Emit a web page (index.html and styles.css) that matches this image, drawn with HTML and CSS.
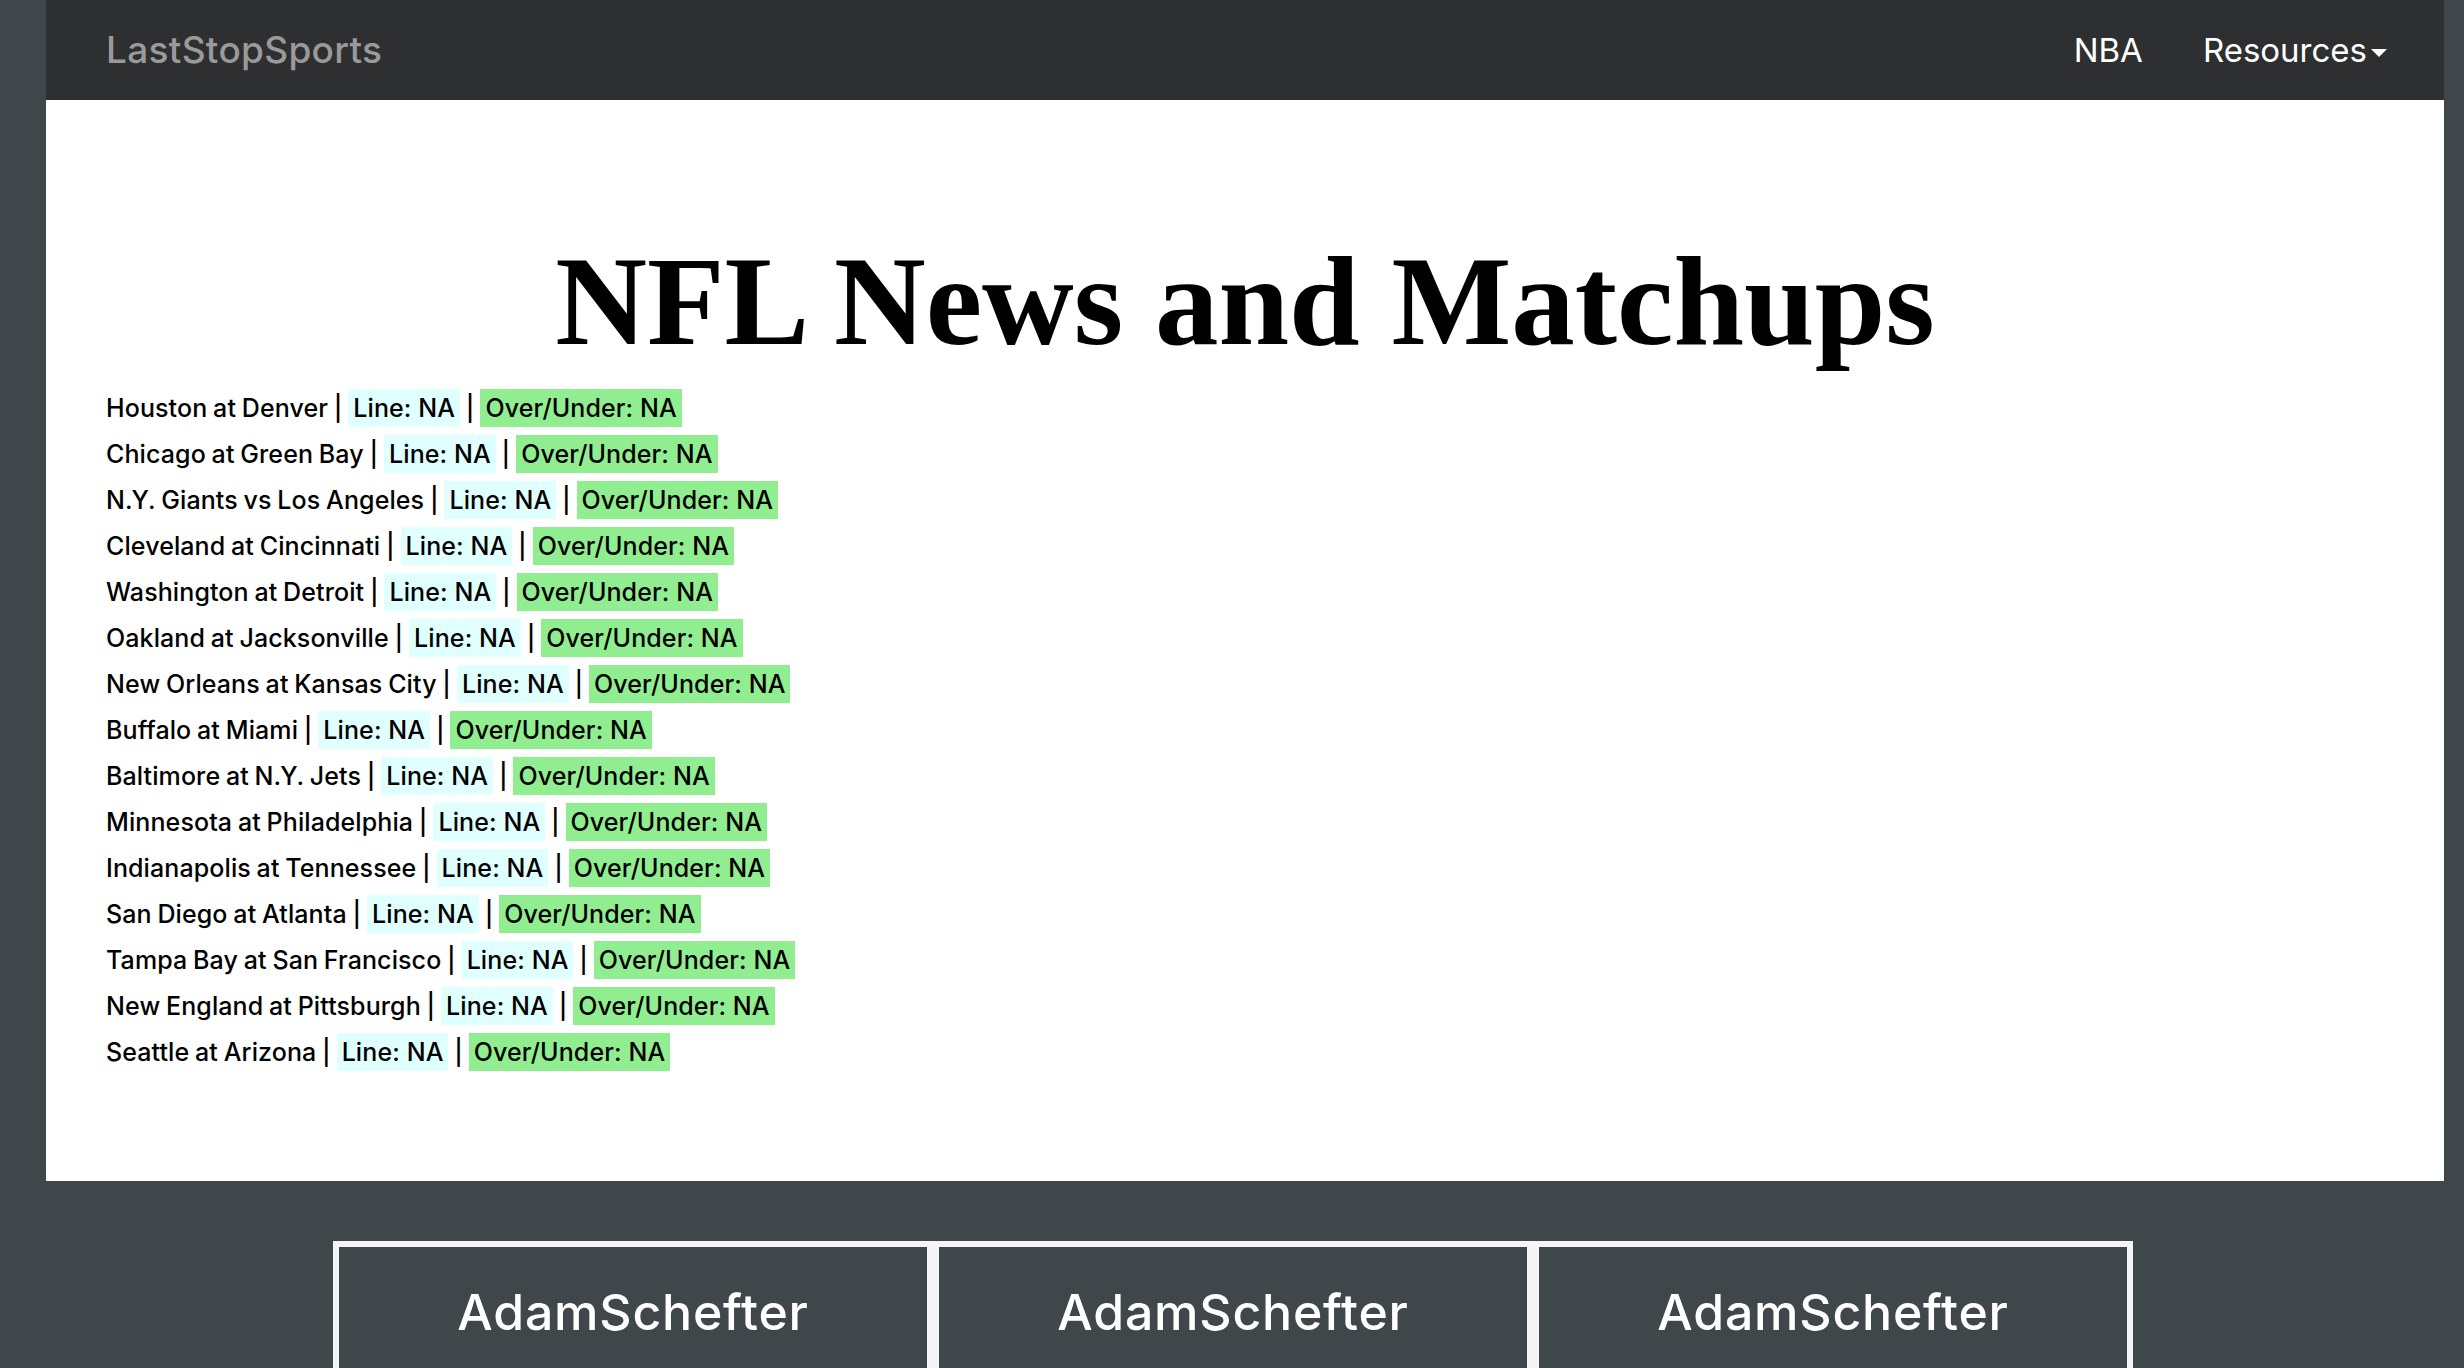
FILE: index.html
```html
<!DOCTYPE html>
<html lang="en">
<head>
<meta charset="utf-8">
<title>LastStopSports - NFL</title>
<link rel="stylesheet" href="styles.css">
</head>
<body>
<div class="page">
  <nav class="navbar">
    <a class="brand" href="#">LastStopSports</a>
    <ul class="nav">
      <li><a href="#">NBA</a></li>
      <li class="last"><a href="#">Resources<span class="caret"></span></a></li>
    </ul>
  </nav>
  <main class="content">
    <h1 class="title">NFL News and Matchups</h1>
    <div class="games">
      <div class="game">Houston at Denver | <span class="line">Line: NA</span> | <span class="ou">Over/Under: NA</span></div>
      <div class="game">Chicago at Green Bay | <span class="line">Line: NA</span> | <span class="ou">Over/Under: NA</span></div>
      <div class="game">N.Y. Giants vs Los Angeles | <span class="line">Line: NA</span> | <span class="ou">Over/Under: NA</span></div>
      <div class="game">Cleveland at Cincinnati | <span class="line">Line: NA</span> | <span class="ou">Over/Under: NA</span></div>
      <div class="game">Washington at Detroit | <span class="line">Line: NA</span> | <span class="ou">Over/Under: NA</span></div>
      <div class="game">Oakland at Jacksonville | <span class="line">Line: NA</span> | <span class="ou">Over/Under: NA</span></div>
      <div class="game">New Orleans at Kansas City | <span class="line">Line: NA</span> | <span class="ou">Over/Under: NA</span></div>
      <div class="game">Buffalo at Miami | <span class="line">Line: NA</span> | <span class="ou">Over/Under: NA</span></div>
      <div class="game">Baltimore at N.Y. Jets | <span class="line">Line: NA</span> | <span class="ou">Over/Under: NA</span></div>
      <div class="game">Minnesota at Philadelphia | <span class="line">Line: NA</span> | <span class="ou">Over/Under: NA</span></div>
      <div class="game">Indianapolis at Tennessee | <span class="line">Line: NA</span> | <span class="ou">Over/Under: NA</span></div>
      <div class="game">San Diego at Atlanta | <span class="line">Line: NA</span> | <span class="ou">Over/Under: NA</span></div>
      <div class="game">Tampa Bay at San Francisco | <span class="line">Line: NA</span> | <span class="ou">Over/Under: NA</span></div>
      <div class="game">New England at Pittsburgh | <span class="line">Line: NA</span> | <span class="ou">Over/Under: NA</span></div>
      <div class="game">Seattle at Arizona | <span class="line">Line: NA</span> | <span class="ou">Over/Under: NA</span></div>
    </div>
  </main>
</div>
<section class="tweets">
  <div class="tweet"><h2 class="tweet-name">AdamSchefter</h2></div>
  <div class="tweet"><h2 class="tweet-name">AdamSchefter</h2></div>
  <div class="tweet"><h2 class="tweet-name">AdamSchefter</h2></div>
</section>
</body>
</html>
```
FILE: styles.css
```css
html, body {
  margin: 0;
  padding: 0;
}
body {
  background: #3f474a;
  font-family: Inter, "Open Sans", "DejaVu Sans", sans-serif;
  color: #000;
  overflow: hidden;
}
a {
  text-decoration: none;
}
.page {
  margin: 0 20px 0 46px;
}
.navbar {
  height: 100px;
  background: #2e2f31;
  display: flex;
  align-items: center;
  justify-content: space-between;
  padding-left: 60px;
}
.brand {
  color: #9a9a9a;
  font-size: 37px;
  font-weight: 500;
  letter-spacing: 0.3px;
  line-height: 100px;
}
.nav {
  list-style: none;
  margin: 0 27px 0 0;
  padding: 0;
  display: flex;
}
.nav li a {
  display: block;
  padding: 0 30px;
  color: #fff;
  font-size: 33px;
  line-height: 100px;
}
.caret {
  display: inline-block;
  width: 0;
  height: 0;
  margin-left: 4px;
  vertical-align: middle;
  border-top: 8px solid #fff;
  border-left: 8px solid transparent;
  border-right: 8px solid transparent;
}
.content {
  background: #fff;
  padding: 132px 60px 102px;
}
.title {
  margin: 0 0 17px;
  text-align: center;
  font-family: "Liberation Serif", "Times New Roman", serif;
  font-weight: bold;
  font-size: 127px;
  line-height: 1.1;
}
.game {
  height: 38px;
  line-height: 38px;
  margin-bottom: 8px;
  font-size: 25px;
  font-weight: 500;
  letter-spacing: 0.1px;
  word-spacing: -1px;
  white-space: nowrap;
}
.game span {
  display: inline-block;
  vertical-align: top;
  padding: 0 5px;
  word-spacing: 0;
}
.line {
  background: #e0ffff;
}
.ou {
  background: #90ee90;
}
.tweets {
  display: flex;
  justify-content: center;
  margin-top: 60px;
  padding-left: 2px;
}
.tweet {
  box-sizing: border-box;
  width: 600px;
  height: 240px;
  border: 6px solid #f5f5f5;
  padding-top: 35px;
  text-align: center;
}
.tweet-name {
  margin: 0;
  color: #fff;
  font-weight: 500;
  font-size: 50px;
  letter-spacing: 0.8px;
  line-height: 60px;
}
```
